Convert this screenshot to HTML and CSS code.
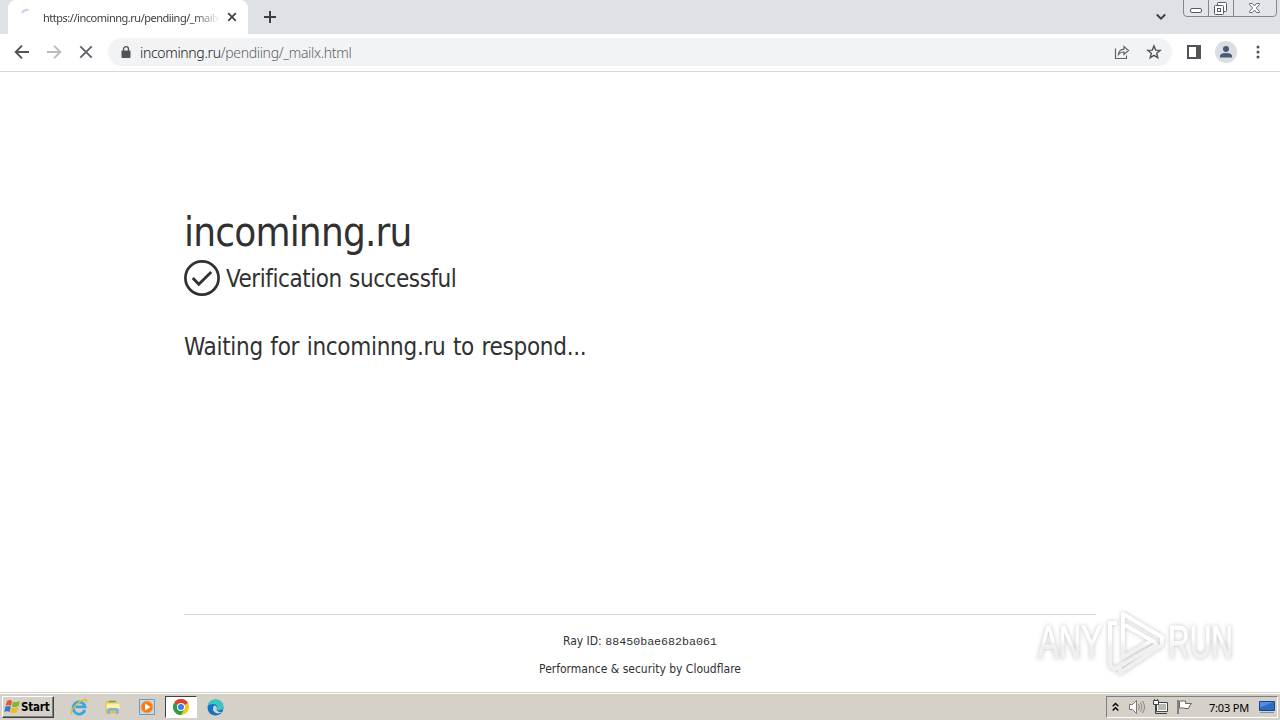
FILE: index.html
```html
<!DOCTYPE html>
<html lang="en">
<head>
  <meta charset="utf-8">
  <title>https://incominng.ru/pendiing/_mailx.html</title>
  <link rel="stylesheet" href="styles.css">
</head>
<body>

<div class="tabstrip">
  <div class="tab">
    <svg class="spinner" width="16" height="16" viewBox="0 0 16 16"><path d="M3 6Q5 2.300 9.500 2.800" fill="none" stroke="#c5d0ee" stroke-width="1.8"/></svg>
    <span class="tab-title">https://incominng.ru/pendiing/_mailx</span>
    <svg class="tab-close" width="10" height="10" viewBox="0 0 10 10"><path d="M1.200 1.200l7.600 7.600M8.800 1.200L1.200 8.800" stroke="#3c4043" stroke-width="1.700"/></svg>
  </div>
  <svg class="new-tab" width="14" height="14" viewBox="0 0 14 14"><path d="M7 1v12M1 7h12" stroke="#3c4043" stroke-width="2"/></svg>
  <svg class="tab-search" width="12" height="8" viewBox="0 0 12 8"><path d="M1.800 1.500L6 5.700l4.200-4.200" fill="none" stroke="#3c4043" stroke-width="1.900"/></svg>
  <svg class="window-buttons" width="94" height="18" viewBox="0 0 94 18">
    <path d="M.5 0v13q0 3.500 3.500 3.500h86q3.500 0 3.500-3.500V0" fill="#e2e5ea" stroke="#84888e"/>
    <path d="M25.500 0v16M50.500 0v16" stroke="#84888e"/>
    <rect x="7.500" y="8.500" width="11" height="4" rx="1.500" fill="#fff" stroke="#555a60"/>
    <rect x="34.500" y="2.500" width="9" height="9" rx="1" fill="#fff" stroke="#555a60"/>
    <rect x="31.500" y="5.500" width="9" height="9" rx="1" fill="#fff" stroke="#555a60"/>
    <rect x="34.500" y="8.500" width="3" height="3" fill="#fff" stroke="#555a60"/>
    <path d="M66.500 3.500h3l2 2.500 2-2.500h3v1L73.300 8l3.200 3.500v1h-3l-2-2.500-2 2.500h-3v-1L69.700 8l-3.200-3.500z" fill="#fff" stroke="#6a6f75"/>
  </svg>
</div>

<div class="toolbar">
  <svg class="nav" width="16" height="16" viewBox="0 0 16 16"><path d="M15 8H2M8 1.700L1.700 8 8 14.300" fill="none" stroke="#505357" stroke-width="1.900"/></svg>
  <svg class="nav" width="16" height="16" viewBox="0 0 16 16"><path d="M1 8h13M8 1.700L14.300 8 8 14.300" fill="none" stroke="#babcbe" stroke-width="1.900"/></svg>
  <svg class="nav" width="16" height="16" viewBox="0 0 16 16"><path d="M2.300 2.300l11.400 11.400M13.700 2.300L2.300 13.700" stroke="#5f6368" stroke-width="1.900"/></svg>
  <div class="omnibox">
    <svg class="lock" width="10" height="13" viewBox="0 0 10 13"><rect x=".5" y="4.500" width="9" height="7.500" rx="1" fill="#505357"/><path d="M2.500 5V3.200a2.500 2.500 0 0 1 5 0V5" fill="none" stroke="#505357" stroke-width="1.300"/></svg>
    <span class="url"><span class="host">incominng.ru</span>/pendiing/_mailx.html</span>
    <svg class="share" width="16" height="16" viewBox="0 0 16 16"><path d="M1.500 4.500v10h11v-3M4.500 10.500q.5-5 5.500-5.300V2.500l4.500 4-4.500 4V8q-3.500-.2-5.500 2.500z" fill="none" stroke="#5f6368" stroke-width="1.200"/></svg>
    <svg class="star" width="16" height="16" viewBox="0 0 16 16"><path d="M8 1.900l1.700 4.200 4.500.3-3.500 2.900 1.100 4.400L8 11.300l-3.800 2.400 1.100-4.400-3.500-2.900 4.500-.3z" fill="none" stroke="#505357" stroke-width="1.400"/></svg>
  </div>
  <svg class="side-panel" width="14" height="14" viewBox="0 0 14 14"><path d="M1 1h12v12H1z" fill="none" stroke="#505357" stroke-width="2"/><path d="M9 1h4v12H9z" fill="#505357"/></svg>
  <svg class="avatar" width="22" height="22" viewBox="0 0 22 22"><circle cx="11" cy="11" r="11" fill="#dadde2"/><circle cx="11" cy="7.900" r="3" fill="#4b5875"/><path d="M5 16.500v-1.200q0-3.300 6-3.300t6 3.300v1.200z" fill="#4b5875"/></svg>
  <svg class="menu" width="4" height="14" viewBox="0 0 4 14" fill="#505357"><circle cx="2" cy="2" r="1.500"/><circle cx="2" cy="7" r="1.500"/><circle cx="2" cy="12" r="1.500"/></svg>
</div>

<div class="page">
  <div class="content">
    <h1>incominng.ru</h1>
    <div class="verified">
      <svg width="36" height="36" viewBox="0 0 36 36" fill="none" stroke="#313131"><circle cx="18" cy="18" r="16.600" stroke-width="2.700"/><path d="M8.800 18l6 6.300L27.200 12.100" stroke-width="2.800"/></svg>
      <span class="verified-text">Verification successful</span>
    </div>
    <div class="waiting">Waiting for incominng.ru to respond...</div>
  </div>
  <div class="footer">
    <div class="ray"><span class="ray-label">Ray ID:</span> <code>88450bae682ba061</code></div>
    <div class="perf">Performance &amp; security by Cloudflare</div>
  </div>
  <svg class="watermark" width="210" height="76" viewBox="0 0 210 76">
    <defs>
      <linearGradient id="fade" gradientUnits="userSpaceOnUse" x1="0" y1="34" x2="0" y2="42">
        <stop offset="0" stop-color="#fff"/>
        <stop offset="1" stop-color="#f0f0f0"/>
      </linearGradient>
    </defs>
    <g class="mark">
      <text x="8" y="53" textLength="64" lengthAdjust="spacingAndGlyphs">ANY</text>
      <text x="138" y="53" textLength="65" lengthAdjust="spacingAndGlyphs">RUN</text>
      <path d="M87 18h-7v43l5 3 43-25M93 54V9l39 23v8L90 68v-5M95 20l31 18M93 52l30-17"/>
    </g>
  </svg>
</div>

<div class="taskbar">
  <div class="start">
    <svg width="17" height="16" viewBox="0 0 17 16"><path d="M3 2q3-2 5 0L7 7Q4 5 1.500 7z" fill="#e35b28"/><path d="M9 2.500q3 1.500 7-.5L14.500 7Q11 9 8 7.500z" fill="#79b735"/><path d="M1.300 8q3-2 5.500 0l-1.200 5Q3 11.500.3 13z" fill="#3479c9"/><path d="M7.800 8.500q3 1.500 6.500-.5L13 13q-3 2-6.500.2z" fill="#f4b91b"/></svg>
    <span class="start-text">Start</span>
  </div>
  <div class="launch">
    <svg width="18" height="18" viewBox="0 0 18 18"><path d="M14.800 12A6 6 0 1 1 15 8.800H5.500" fill="none" stroke="#38a6df" stroke-width="2.800"/><path d="M2 16.500C-1.500 13 9 2 16 1.500q1.500.5 0 3.200" fill="none" stroke="#e9b834" stroke-width="1.300"/></svg>
  </div>
  <div class="launch">
    <svg width="18" height="18" viewBox="0 0 18 18"><path d="M1.500 3h5l1 1.500H15v11H1.500z" fill="#e5bd56"/><path d="M2.500 5.500h13V11h-13z" fill="#fff0a6"/><path d="M5 3.500h7" stroke="#67a849" stroke-width="1.500"/><path d="M3.500 16v-4q0-2 2-2h7q2 0 2 2v4h-2.500v-3.500H6V16z" fill="#75b8dc"/></svg>
  </div>
  <div class="launch">
    <svg width="18" height="18" viewBox="0 0 18 18"><path d="M1.500 1.500h15v15h-15z" fill="#bfdcf1" stroke="#6b9ac3"/><circle cx="9" cy="9" r="6" fill="#f47c16" stroke="#f8ad51"/><path d="M7 5.500v7L12.500 9z" fill="#fff"/></svg>
  </div>
  <div class="launch active">
    <svg width="16" height="16" viewBox="0 0 16 16"><circle cx="8" cy="8" r="8" fill="#f8c51d"/><path d="M8 8L1.070 4A8 8 0 0 1 14.930 4z" fill="#df4032"/><path d="M8 8L1.070 4A8 8 0 0 0 8 16l3.500-6z" fill="#2b9e4c"/><circle cx="8" cy="8" r="4" fill="#fff"/><circle cx="8" cy="8" r="3" fill="#3c7de6"/></svg>
  </div>
  <div class="launch">
    <svg width="17" height="17" viewBox="0 0 17 17"><circle cx="8.500" cy="8.500" r="8" fill="#1474c4"/><path d="M.8 7Q2 .5 8.500.5q7.500.3 8 7.500-.5 3.500-5 3.300-2.500-.2-1.300-1.800Q11 5.500 7 5 3 4.600.8 7z" fill="#3bc6bf"/><path d="M7 6.500q-3 5 2 7.500 3 1.300 6-1-4.500.3-5.300-2.300-.4-1 .4-1.800Q10 7 7 6.500z" fill="#d5d0c8"/></svg>
  </div>
  <div class="tray">
    <svg class="chevrons" width="7" height="10" viewBox="0 0 7 10"><path d="M.7 4.200l2.800-2.700 2.800 2.700M.7 8.500l2.800-2.700 2.800 2.700" fill="none" stroke="#000" stroke-width="1.400"/></svg>
    <svg class="sound" width="17" height="16" viewBox="0 0 17 16"><path d="M1.500 5.500h3l4-4v13l-4-4h-3z" fill="#fff" stroke="#777"/><path d="M10.500 5q2 3 0 6M12.500 3.300q3 4.700 0 9.400M14.500 2q4 6 0 12" fill="none" stroke="#888"/></svg>
    <svg class="network" width="17" height="16" viewBox="0 0 17 16"><path d="M4.500 3.500h11v9h-11z" fill="#fff" stroke="#444"/><path d="M6 5h8v6H6z" fill="#b8b8b8"/><path d="M6 14.500h9" stroke="#444"/><path d="M1.500 1.500h5v4h-5z" fill="#fff" stroke="#444"/><path d="M3.500 5.500v9h3M2.500 0v2M5.500 0v2" fill="none" stroke="#444"/></svg>
    <svg class="flag" width="18" height="16" viewBox="0 0 18 16"><path d="M2 1v14" stroke="#666" stroke-width="1.500"/><path d="M3.500 2h6v2.500h6l-2 2.500-1 2.500h-4V9h-5z" fill="#fff" stroke="#666"/></svg>
    <span class="clock">7:03 PM</span>
    <svg class="desktop" width="16" height="14" viewBox="0 0 16 14"><path d="M.5 1.500h15v9H.5z" fill="#2d6cc0" stroke="#16458c"/><path d="M1 2h14L1 7.500z" fill="#4f91dc"/><path d="M1 12.500h14" stroke="#7391b7"/></svg>
  </div>
</div>

</body>
</html>
```
FILE: styles.css
```css
* {
  box-sizing: border-box;
}
body {
  margin: 0;
  width: 1280px;
  height: 720px;
  overflow: hidden;
  display: flex;
  flex-direction: column;
  background: #fff;
  color: #313131;
  font-family: "DejaVu Sans Condensed", "DejaVu Sans", sans-serif;
  font-stretch: condensed;
}
svg {
  display: block;
  flex: none;
}

.tabstrip {
  flex: none;
  height: 34px;
  background: #dee1e6;
  display: flex;
  align-items: center;
  padding-left: 8px;
}
.tab {
  width: 240px;
  height: 34px;
  background: #fff;
  border-radius: 8px 8px 0 0;
  display: flex;
  align-items: center;
  padding-left: 11px;
}
.spinner {
  margin-top: -4px;
}
.tab-title {
  margin-left: 8px;
  width: 177px;
  overflow: hidden;
  white-space: nowrap;
  font-family: "Noto Sans", sans-serif;
  font-size: 11px;
  letter-spacing: -0.48px;
  color: #3c4043;
  -webkit-mask-image: linear-gradient(to right, #000 152px, transparent 177px);
  mask-image: linear-gradient(to right, #000 152px, transparent 177px);
}
.tab-close {
  margin-left: 7px;
}
.new-tab {
  margin-left: 15px;
}
.tab-search {
  margin-left: auto;
}
.window-buttons {
  align-self: flex-start;
  margin: 0 3px 0 16px;
}

.toolbar {
  flex: none;
  height: 38px;
  border-bottom: 1px solid #d6d8db;
  display: flex;
  align-items: center;
  padding: 0 0 1px 14px;
}
.nav {
  margin-right: 16px;
}
.omnibox {
  width: 1064px;
  height: 28px;
  margin-left: -2px;
  border-radius: 14px;
  background: #f1f3f4;
  display: flex;
  align-items: center;
  padding: 0 10px 0 13px;
}
.url {
  margin-left: 9px;
  flex: 1;
  font-family: "Noto Sans", sans-serif;
  font-weight: 300;
  font-size: 14px;
  letter-spacing: -0.33px;
  color: #5f6368;
}
.host {
  color: #202124;
}
.share {
  margin-right: 16px;
}
.side-panel {
  margin-left: 15px;
}
.avatar {
  margin-left: 14px;
}
.menu {
  margin-left: 19px;
}

.page {
  flex: 1;
  position: relative;
  display: flex;
  flex-direction: column;
  padding: 0 184px;
}
.content {
  flex: 1;
  padding-top: 130px;
}
h1 {
  margin: 0;
  font-size: 40px;
  font-weight: 400;
  line-height: 60px;
  letter-spacing: -0.8px;
}
.verified {
  display: flex;
  align-items: center;
  margin-top: -2px;
  height: 36px;
}
.verified-text {
  margin-left: 6px;
  padding-top: 2px;
  font-size: 24px;
  letter-spacing: -0.45px;
  word-spacing: 1px;
}
.waiting {
  margin-top: 33px;
  font-size: 24px;
  line-height: 36px;
  letter-spacing: -0.3px;
  word-spacing: 1px;
}
.footer {
  height: 78px;
  border-top: 1px solid #d9d9d9;
  padding-top: 17px;
  text-align: center;
  font-size: 12px;
  line-height: 18px;
}
.footer code {
  font-family: "Liberation Mono", monospace;
  font-size: 11.67px;
}
.perf {
  margin-top: 9px;
}
.watermark {
  position: absolute;
  right: 40px;
  bottom: 11px;
  filter: drop-shadow(0 0 2px #c4c4c4);
}
.mark text {
  font-family: "Liberation Sans", sans-serif;
  font-size: 46px;
  fill: url(#fade);
  stroke: url(#fade);
  stroke-width: 1;
}
.mark path {
  fill: none;
  stroke: url(#fade);
  stroke-width: 4;
  stroke-linejoin: round;
}

.taskbar {
  flex: none;
  height: 28px;
  background: #d5d0c8;
  border-top: 1px solid #d5d0c8;
  box-shadow: inset 0 1px #fff;
  display: flex;
  align-items: center;
  padding: 1px 2px 0;
}
.start {
  width: 52px;
  height: 22px;
  border: 1px solid;
  border-color: #fff #404040 #404040 #fff;
  box-shadow: inset -1px -1px #808080;
  display: flex;
  align-items: center;
  padding-left: 1px;
  margin-right: 9px;
  color: #000;
  font-size: 11.5px;
  font-weight: 700;
}
.start-text {
  letter-spacing: -0.2px;
}
.launch {
  width: 32px;
  height: 22px;
  margin-right: 2px;
  display: flex;
  align-items: center;
  justify-content: center;
}
.active {
  background: #fff;
  border: 1px solid;
  border-color: #404040 #fff #fff #404040;
}
.tray {
  margin-left: auto;
  width: 172px;
  height: 22px;
  border: 1px solid;
  border-color: #808080 #fff #fff #808080;
  display: flex;
  align-items: center;
  padding-left: 5px;
}
.sound {
  margin-left: 9px;
}
.network {
  margin-left: 7px;
}
.flag {
  margin-left: 7px;
}
.clock {
  margin-left: 15px;
  width: 41px;
  white-space: nowrap;
  color: #000;
  font-family: "Noto Sans", sans-serif;
  font-size: 11px;
  letter-spacing: -0.2px;
}
.desktop {
  margin-left: 9px;
}
```
